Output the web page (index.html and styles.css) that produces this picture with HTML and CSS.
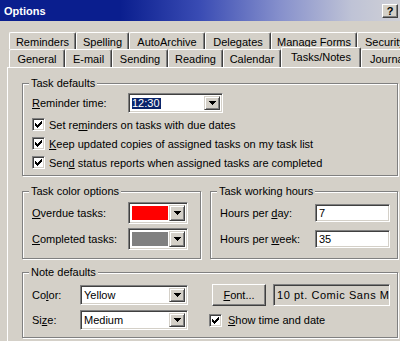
FILE: index.html
```html
<!DOCTYPE html>
<html>
<head>
<meta charset="utf-8">
<title>Options</title>
<link rel="stylesheet" href="styles.css">
</head>
<body>
<div class="dialog">
  <div class="titlebar">
    <span class="title">Options</span>
    <span class="help">?</span>
  </div>
  <div class="tabs">
    <div class="tabrow back">
      <div class="tab t-rem">Reminders</div>
      <div class="tab t-spe">Spelling</div>
      <div class="tab t-aut">AutoArchive</div>
      <div class="tab t-del">Delegates</div>
      <div class="tab t-man">Manage Forms</div>
      <div class="tab t-sec">Security</div>
    </div>
    <div class="tabrow front">
      <div class="tab t-gen">General</div>
      <div class="tab t-ema">E-mail</div>
      <div class="tab t-sen">Sending</div>
      <div class="tab t-rea">Reading</div>
      <div class="tab t-cal">Calendar</div>
      <div class="tab t-tas sel">Tasks/Notes</div>
      <div class="tab t-jou">Journal</div>
    </div>
  </div>
  <div class="panel">
    <div class="group g-defaults">
      <span class="group-title">Task defaults</span>
      <div class="row r-time">
        <span class="lbl l-time"><u>R</u>eminder time:</span>
        <div class="combo c-time">
          <span class="combo-text"><span class="hilite">12:30</span></span>
          <span class="ddbtn"><svg width="7" height="4" viewBox="0 0 7 4"><path d="M0 0h7v1h-7zM1 1h5v1h-5zM2 2h3v1h-3zM3 3h1v1h-1z" fill="#000"/></svg></span>
        </div>
      </div>
      <div class="check-row first">
        <span class="cb"><svg width="7" height="7" viewBox="0 0 7 7"><path d="M6 0h1v1h-1zM5 1h2v1h-2zM0 2h1v1h-1zM4 2h3v1h-3zM0 3h2v1h-2zM3 3h3v1h-3zM0 4h5v1h-5zM1 5h3v1h-3zM2 6h1v1h-1z" fill="#000"/></svg></span>
        <span>Set re<u>m</u>inders on tasks with due dates</span>
      </div>
      <div class="check-row">
        <span class="cb"><svg width="7" height="7" viewBox="0 0 7 7"><path d="M6 0h1v1h-1zM5 1h2v1h-2zM0 2h1v1h-1zM4 2h3v1h-3zM0 3h2v1h-2zM3 3h3v1h-3zM0 4h5v1h-5zM1 5h3v1h-3zM2 6h1v1h-1z" fill="#000"/></svg></span>
        <span><u>K</u>eep updated copies of assigned tasks on my task list</span>
      </div>
      <div class="check-row">
        <span class="cb"><svg width="7" height="7" viewBox="0 0 7 7"><path d="M6 0h1v1h-1zM5 1h2v1h-2zM0 2h1v1h-1zM4 2h3v1h-3zM0 3h2v1h-2zM3 3h3v1h-3zM0 4h5v1h-5zM1 5h3v1h-3zM2 6h1v1h-1z" fill="#000"/></svg></span>
        <span>Sen<u>d</u> status reports when assigned tasks are completed</span>
      </div>
    </div>

    <div class="group-pair">
      <div class="group g-colors">
        <span class="group-title">Task color options</span>
        <div class="row r-mid">
          <span class="lbl l-color"><u>O</u>verdue tasks:</span>
          <div class="ccombo">
            <span class="swatch red"></span>
            <span class="ddbtn"><svg width="7" height="4" viewBox="0 0 7 4"><path d="M0 0h7v1h-7zM1 1h5v1h-5zM2 2h3v1h-3zM3 3h1v1h-1z" fill="#000"/></svg></span>
          </div>
        </div>
        <div class="row r-mid">
          <span class="lbl l-color"><u>C</u>ompleted tasks:</span>
          <div class="ccombo">
            <span class="swatch gray"></span>
            <span class="ddbtn"><svg width="7" height="4" viewBox="0 0 7 4"><path d="M0 0h7v1h-7zM1 1h5v1h-5zM2 2h3v1h-3zM3 3h1v1h-1z" fill="#000"/></svg></span>
          </div>
        </div>
      </div>
      <div class="group g-hours">
        <span class="group-title">Task working hours</span>
        <div class="row r-mid">
          <span class="lbl l-hours">Hours per <u>d</u>ay:</span>
          <span class="edit">7</span>
        </div>
        <div class="row r-mid">
          <span class="lbl l-hours">Hours per <u>w</u>eek:</span>
          <span class="edit">35</span>
        </div>
      </div>
    </div>

    <div class="group g-notes">
      <span class="group-title">Note defaults</span>
      <div class="row r-note">
        <span class="lbl l-note">Co<u>l</u>or:</span>
        <div class="combo c-note">
          <span class="combo-text">Yellow</span>
          <span class="ddbtn"><svg width="7" height="4" viewBox="0 0 7 4"><path d="M0 0h7v1h-7zM1 1h5v1h-5zM2 2h3v1h-3zM3 3h1v1h-1z" fill="#000"/></svg></span>
        </div>
        <span class="button"><u>F</u>ont...</span>
        <span class="readonly">10 pt. Comic Sans MS</span>
      </div>
      <div class="row r-note second">
        <span class="lbl l-note">Si<u>z</u>e:</span>
        <div class="combo c-note">
          <span class="combo-text">Medium</span>
          <span class="ddbtn"><svg width="7" height="4" viewBox="0 0 7 4"><path d="M0 0h7v1h-7zM1 1h5v1h-5zM2 2h3v1h-3zM3 3h1v1h-1z" fill="#000"/></svg></span>
        </div>
        <span class="cb cb-show"><svg width="7" height="7" viewBox="0 0 7 7"><path d="M6 0h1v1h-1zM5 1h2v1h-2zM0 2h1v1h-1zM4 2h3v1h-3zM0 3h2v1h-2zM3 3h3v1h-3zM0 4h5v1h-5zM1 5h3v1h-3zM2 6h1v1h-1z" fill="#000"/></svg></span>
        <span><u>S</u>how time and date</span>
      </div>
    </div>
  </div>
</div>
</body>
</html>
```

FILE: styles.css
```css
* { box-sizing: border-box; }
html, body { margin: 0; padding: 0; }
body {
  width: 400px;
  height: 341px;
  overflow: hidden;
  background: #d4d0c8;
  font-family: "Liberation Sans", Arial, sans-serif;
  font-size: 11px;
  color: #000;
}
.dialog { width: 400px; height: 341px; overflow: hidden; }
u { text-decoration: underline; text-underline-offset: 1px; }

/* title bar */
.titlebar {
  height: 21px;
  display: flex;
  align-items: center;
  justify-content: space-between;
  padding: 0 2px 0 4px;
  background: linear-gradient(to right, #0a1e8e 0%, #0a1e8e 30%, #3a4cb4 50%, #8690cc 70%, #bfc3d6 88%, #cfd0d6 100%);
}
.title { color: #fff; font-weight: bold; }
.help {
  width: 16px;
  height: 14px;
  background: #d4d0c8;
  border: 1px solid;
  border-color: #fff #404040 #404040 #fff;
  box-shadow: inset -1px -1px 0 #808080;
  font-weight: bold;
  font-size: 11px;
  line-height: 12px;
  text-align: center;
}

/* tabs */
.tabs { margin-top: 11px; width: 400px; overflow: hidden; }
.tabrow { display: flex; padding-left: 9px; }
.tabrow.back { height: 17px; }
.tabrow.front { height: 18px; }
.tab {
  flex: none;
  height: 100%;
  display: flex;
  align-items: center;
  justify-content: center;
  background: #d4d0c8;
  border-top: 1px solid #fff;
  border-left: 1px solid #fff;
  border-right: 1px solid #404040;
  box-shadow: inset -1px 0 0 #808080;
  border-radius: 2px 2px 0 0;
  white-space: nowrap;
  padding-top: 1px;
}
.tab.sel {
  height: 21px;
  margin-top: -2px;
  position: relative;
  z-index: 1;
  padding-bottom: 3px;
}
.t-rem { width: 67px; }
.t-spe { width: 53px; }
.t-aut { width: 76px; }
.t-del { width: 66px; }
.t-man { width: 86px; }
.t-sec { width: 60px; justify-content: flex-start; padding-left: 7px; }
.t-gen { width: 56px; }
.t-ema { width: 47px; }
.t-sen { width: 56px; }
.t-rea { width: 55px; }
.t-cal { width: 58px; }
.t-tas { width: 80px; }
.t-jou { width: 60px; justify-content: flex-start; padding-left: 8px; }

/* panel */
.panel {
  margin-left: 7px;
  width: 393px;
  height: 274px;
  border-top: 1px solid #fff;
  border-left: 1px solid #fff;
  padding: 15px 0 0 14px;
}

/* group boxes */
.group {
  border: 1px solid #808080;
  box-shadow: inset 1px 1px 0 #fff, 1px 1px 0 #fff;
  padding: 0 8px 0 9px;
}
.group-title {
  display: block;
  width: max-content;
  height: 13px;
  line-height: 13px;
  margin: -7px 0 0 -3px;
  padding: 0 2px;
  background: #d4d0c8;
}
.g-defaults { width: 376px; padding-bottom: 3px; }
.group-pair { display: flex; margin-top: 15px; }
.g-colors { width: 179px; padding-bottom: 8px; }
.g-hours { width: 188px; margin-left: 9px; padding-bottom: 8px; }
.g-notes { width: 376px; margin-top: 13px; padding-bottom: 6px; }

.row { display: flex; align-items: center; }
.lbl { flex: none; }
.r-time { margin-top: 3px; height: 20px; }
.l-time { width: 96px; }
.r-mid { margin-top: 4px; height: 22px; }
.l-color { width: 96px; }
.l-hours { width: 95px; }
.r-note { margin-top: 5px; height: 22px; }
.r-note.second { margin-top: 3px; }
.l-note { width: 48px; }

.check-row { display: flex; align-items: center; height: 19px; }
.check-row.first { margin-top: 2px; }

/* checkbox */
.cb {
  flex: none;
  width: 13px;
  height: 13px;
  background: #fff;
  border: 1px solid;
  border-color: #808080 #fff #fff #808080;
  box-shadow: inset 1px 1px 0 #404040, inset -1px -1px 0 #d4d0c8;
  display: flex;
  align-items: center;
  justify-content: center;
  margin-right: 4px;
}
.cb svg { display: block; }
.cb-show { margin-left: 21px; margin-right: 6px; }

/* sunken controls */
.combo, .ccombo, .edit, .readonly {
  flex: none;
  border: 1px solid;
  border-color: #808080 #fff #fff #808080;
  box-shadow: inset 1px 1px 0 #404040, inset -1px -1px 0 #d4d0c8;
}
.combo {
  display: flex;
  height: 20px;
  background: #fff;
  padding: 2px;
}
.c-time { width: 95px; }
.c-note { width: 108px; }
.combo-text {
  flex: 1;
  display: flex;
  align-items: center;
  padding-left: 1px;
  white-space: nowrap;
}
.hilite { background: #0a246a; color: #fff; line-height: 11px; padding: 0 1px 0 0; }
.ddbtn {
  flex: none;
  width: 16px;
  background: #d4d0c8;
  border: 1px solid;
  border-color: #d4d0c8 #404040 #404040 #d4d0c8;
  box-shadow: inset 1px 1px 0 #fff, inset -1px -1px 0 #808080;
  display: flex;
  align-items: center;
  justify-content: center;
}
.ddbtn svg { display: block; }
.ccombo {
  width: 60px;
  height: 22px;
  display: flex;
  padding: 2px;
  background: #fff;
}
.swatch { flex: 1; border: 1px solid #fff; }
.swatch.red { background: #ff0000; }
.swatch.gray { background: #808080; }

.edit {
  width: 75px;
  height: 18px;
  background: #fff;
  padding-left: 3px;
  line-height: 16px;
}
.button {
  flex: none;
  width: 54px;
  height: 22px;
  margin-left: 24px;
  background: #d4d0c8;
  border: 1px solid;
  border-color: #fff #404040 #404040 #fff;
  box-shadow: inset -1px -1px 0 #808080;
  display: flex;
  align-items: center;
  justify-content: center;
}
.readonly {
  width: 117px;
  height: 22px;
  margin-left: 7px;
  background: #d4d0c8;
  padding-left: 3px;
  line-height: 20px;
  white-space: nowrap;
  overflow: hidden;
  letter-spacing: 0.55px;
}
```
